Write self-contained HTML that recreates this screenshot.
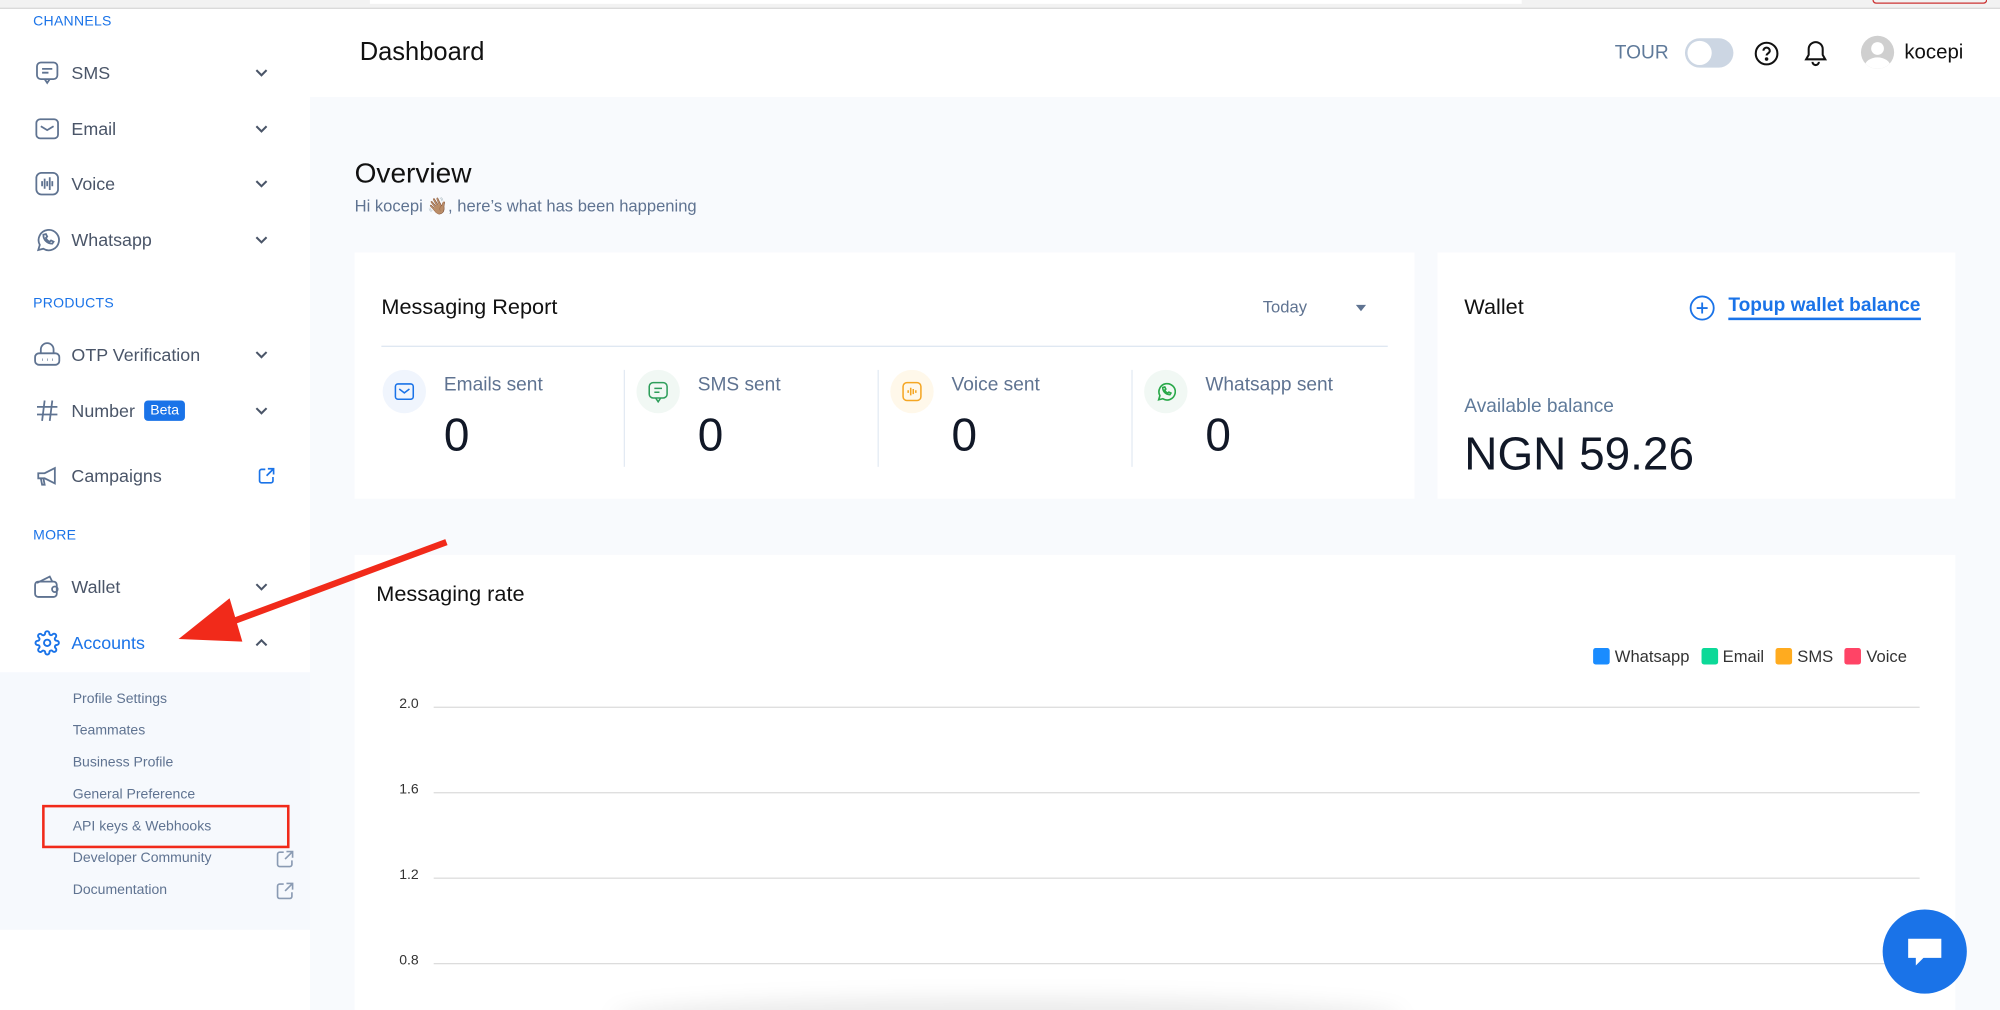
<!DOCTYPE html>
<html><head><meta charset="utf-8"><style>
*{box-sizing:border-box;margin:0;padding:0}
html,body{width:2000px;height:1010px;overflow:hidden;background:#fff;font-family:"Liberation Sans",Arial,sans-serif}
#w{position:absolute;left:0;top:0;width:1568px;height:792px;transform:scale(1.27551);transform-origin:0 0;background:#fff;overflow:hidden}
.a{position:absolute}
.sec{position:absolute;left:26px;font-size:11px;color:#1a73e8;letter-spacing:.2px}
.nav{position:absolute;left:26px;width:190px;height:24px;display:flex;align-items:center;font-size:14px;color:#4a5568}
.nav .ic{width:22px;height:22px;margin-right:8px;display:flex;align-items:center;justify-content:center}
.nav .chev{position:absolute;right:5px;top:6px}
.sub{position:absolute;left:57px;font-size:11px;color:#5f7391}
.card{position:absolute;background:#fff}
.stat{position:absolute;top:288px;width:190px;height:80px}
.stat .circ{position:absolute;left:0;top:2px;width:34px;height:34px;border-radius:50%}
.stat .lbl{position:absolute;left:48px;top:5px;font-size:15px;color:#5f7391}
.stat .num{position:absolute;left:48px;top:32px;font-size:36px;color:#111827}
.vd{position:absolute;top:290px;width:1px;height:76px;background:#e3eaf3}
.gl{position:absolute;left:340px;width:1165px;height:1px;background:#dcdcdc}
.yl{position:absolute;left:313px;font-size:11px;color:#333}
</style></head><body><div id="w">
<div class="a" style="left:0;top:0;width:1568px;height:7px;background:#f2f2f2;border-bottom:1px solid #d8d8d8"></div>
<div class="a" style="left:290px;top:0;width:903px;height:3px;background:#fff"></div>
<div class="a" style="left:1468px;top:0;width:90px;height:3px;border:1px solid #c33;border-top:none;border-radius:0 0 4px 4px"></div>

<div class="a" style="left:0;top:8px;width:243px;height:784px;background:#fff"></div>
<div class="sec" style="top:11px">CHANNELS</div>
<div class="nav" style="top:45px"><span class="ic"><svg width="20" height="20" viewBox="0 0 20 20" fill="none" stroke="#5f7391" stroke-width="1.4"><rect x="2" y="2" width="16" height="13" rx="3"/><path d="M8 15l2 3 2-3M6 7h8M6 10h5"/></svg></span>SMS<svg class="chev" width="12" height="12" viewBox="0 0 12 12" fill="none" stroke="#4a5568" stroke-width="1.6"><path d="M2 4l4 4 4-4"/></svg></div>
<div class="nav" style="top:89px"><span class="ic"><svg width="20" height="20" viewBox="0 0 20 20" fill="none" stroke="#5f7391" stroke-width="1.4"><rect x="1.5" y="2.5" width="17" height="15" rx="3"/><path d="M5 8l5 3 5-3"/></svg></span>Email<svg class="chev" width="12" height="12" viewBox="0 0 12 12" fill="none" stroke="#4a5568" stroke-width="1.6"><path d="M2 4l4 4 4-4"/></svg></div>
<div class="nav" style="top:132px"><span class="ic"><svg width="20" height="20" viewBox="0 0 20 20" fill="none" stroke="#5f7391" stroke-width="1.4"><rect x="1.5" y="1.5" width="17" height="17" rx="4"/><path d="M6 8v4M8 6v8M10 8v4M12 5v10M14 8v4"/></svg></span>Voice<svg class="chev" width="12" height="12" viewBox="0 0 12 12" fill="none" stroke="#4a5568" stroke-width="1.6"><path d="M2 4l4 4 4-4"/></svg></div>
<div class="nav" style="top:176px"><span class="ic"><svg width="20" height="20" viewBox="0 0 20 20" fill="none" stroke="#5f7391" stroke-width="1.4"><path d="M3 18l1.2-4A8 8 0 1 1 7 17z"/><path d="M7 6c0 4 3 7 7 7l1-1.5-2-1-1 1c-1.5-.5-2.5-1.5-3-3l1-1-1-2z"/></svg></span>Whatsapp<svg class="chev" width="12" height="12" viewBox="0 0 12 12" fill="none" stroke="#4a5568" stroke-width="1.6"><path d="M2 4l4 4 4-4"/></svg></div>

<div class="sec" style="top:232px">PRODUCTS</div>
<div class="nav" style="top:266px"><span class="ic"><svg width="22" height="20" viewBox="0 0 22 20" fill="none" stroke="#5f7391" stroke-width="1.4"><path d="M6 9V6a5 5 0 0 1 10 0v3"/><rect x="1.5" y="9" width="19" height="9" rx="3"/><path d="M7 14h.5M11 14h.5M15 14h.5" stroke-width="1.8"/></svg></span>OTP Verification<svg class="chev" width="12" height="12" viewBox="0 0 12 12" fill="none" stroke="#4a5568" stroke-width="1.6"><path d="M2 4l4 4 4-4"/></svg></div>
<div class="nav" style="top:310px"><span class="ic"><svg width="20" height="20" viewBox="0 0 20 20" fill="none" stroke="#5f7391" stroke-width="1.4"><path d="M8 2L6 18M14 2l-2 16M2 7h16M2 13h16"/></svg></span>Number<span style="margin-left:7px;background:#1a73e8;color:#fff;font-size:11px;padding:2px 5px;border-radius:3px">Beta</span><svg class="chev" width="12" height="12" viewBox="0 0 12 12" fill="none" stroke="#4a5568" stroke-width="1.6"><path d="M2 4l4 4 4-4"/></svg></div>
<div class="nav" style="top:361px"><span class="ic"><svg width="20" height="20" viewBox="0 0 20 20" fill="none" stroke="#5f7391" stroke-width="1.4"><path d="M3 8h5l8-4v12l-8-4H3z"/><path d="M5 12l1 5h2l-1-5"/></svg></span>Campaigns<svg class="chev" style="top:5px;right:0" width="14" height="14" viewBox="0 0 14 14" fill="none" stroke="#1a73e8" stroke-width="1.3"><path d="M6 2H3a1.5 1.5 0 0 0-1.5 1.5v7.5A1.5 1.5 0 0 0 3 12.5h7.5A1.5 1.5 0 0 0 12 11V8M8 1.5h4.5V6M12.5 1.5L7 7"/></svg></div>

<div class="sec" style="top:414px">MORE</div>
<div class="nav" style="top:448px"><span class="ic"><svg width="22" height="20" viewBox="0 0 22 20" fill="none" stroke="#5f7391" stroke-width="1.4"><path d="M3 7l10-5 2 4"/><rect x="1.5" y="6" width="17" height="12" rx="2.5"/><circle cx="17" cy="12" r="2.2"/></svg></span>Wallet<svg class="chev" width="12" height="12" viewBox="0 0 12 12" fill="none" stroke="#4a5568" stroke-width="1.6"><path d="M2 4l4 4 4-4"/></svg></div>
<div class="nav" style="top:492px;color:#1a73e8"><span class="ic"><svg width="20" height="20" viewBox="0 0 24 24" fill="none" stroke="#1a73e8" stroke-width="1.8"><circle cx="12" cy="12" r="3"/><path d="M19.4 15a1.7 1.7 0 0 0 .3 1.8l.1.1a2 2 0 1 1-2.8 2.8l-.1-.1a1.7 1.7 0 0 0-1.8-.3 1.7 1.7 0 0 0-1 1.5V21a2 2 0 1 1-4 0v-.1a1.7 1.7 0 0 0-1.1-1.5 1.7 1.7 0 0 0-1.8.3l-.1.1a2 2 0 1 1-2.8-2.8l.1-.1a1.7 1.7 0 0 0 .3-1.8 1.7 1.7 0 0 0-1.5-1H3a2 2 0 1 1 0-4h.1a1.7 1.7 0 0 0 1.5-1.1 1.7 1.7 0 0 0-.3-1.8l-.1-.1a2 2 0 1 1 2.8-2.8l.1.1a1.7 1.7 0 0 0 1.8.3H9a1.7 1.7 0 0 0 1-1.5V3a2 2 0 1 1 4 0v.1a1.7 1.7 0 0 0 1 1.5 1.7 1.7 0 0 0 1.8-.3l.1-.1a2 2 0 1 1 2.8 2.8l-.1.1a1.7 1.7 0 0 0-.3 1.8V9a1.7 1.7 0 0 0 1.5 1H21a2 2 0 1 1 0 4h-.1a1.7 1.7 0 0 0-1.5 1z"/></svg></span>Accounts<svg class="chev" width="12" height="12" viewBox="0 0 12 12" fill="none" stroke="#4a5568" stroke-width="1.6"><path d="M2 8l4-4 4 4"/></svg></div>
<div class="a" style="left:0;top:527px;width:243px;height:202px;background:#f6f9fd"></div>
<div class="sub" style="top:542px">Profile Settings</div>
<div class="sub" style="top:567px">Teammates</div>
<div class="sub" style="top:592px">Business Profile</div>
<div class="sub" style="top:617px">General Preference</div>
<div class="sub" style="top:642px">API keys &amp; Webhooks</div>
<div class="sub" style="top:667px">Developer Community</div>
<div class="sub" style="top:692px">Documentation</div>
<svg class="a" style="left:216px;top:666px" width="15" height="15" viewBox="0 0 14 14" fill="none" stroke="#8a9bb3" stroke-width="1.2"><path d="M6 2H3a1.5 1.5 0 0 0-1.5 1.5v7.5A1.5 1.5 0 0 0 3 12.5h7.5A1.5 1.5 0 0 0 12 11V8M8 1.5h4.5V6M12.5 1.5L7 7"/></svg>
<svg class="a" style="left:216px;top:691px" width="15" height="15" viewBox="0 0 14 14" fill="none" stroke="#8a9bb3" stroke-width="1.2"><path d="M6 2H3a1.5 1.5 0 0 0-1.5 1.5v7.5A1.5 1.5 0 0 0 3 12.5h7.5A1.5 1.5 0 0 0 12 11V8M8 1.5h4.5V6M12.5 1.5L7 7"/></svg>
<div class="a" style="left:33px;top:631px;width:194px;height:34px;border:2.5px solid #f12a1a"></div>

<div class="a" style="left:243px;top:76px;width:1325px;height:716px;background:#f8fafd"></div>
<div class="a" style="left:282px;top:30px;font-size:20px;color:#111">Dashboard</div>
<div class="a" style="left:1266px;top:33px;font-size:15px;color:#5f7a9a">TOUR</div>
<div class="a" style="left:1321px;top:30px;width:38px;height:23px;border-radius:12px;background:#ccd6e3"><div style="position:absolute;left:2px;top:2px;width:19px;height:19px;border-radius:50%;background:#fff"></div></div>
<svg class="a" style="left:1375px;top:32px" width="20" height="20" viewBox="0 0 20 20" fill="none" stroke="#111" stroke-width="1.6"><circle cx="10" cy="10" r="8.5"/><path d="M7.5 7.7a2.5 2.5 0 0 1 5 .3c0 1.6-2.5 2-2.5 3.5"/><circle cx="10" cy="14.3" r=".6" fill="#111"/></svg>
<svg class="a" style="left:1413px;top:31px" width="21" height="22" viewBox="0 0 21 22" fill="none" stroke="#111" stroke-width="1.6"><path d="M10.5 2a5.5 5.5 0 0 1 5.5 5.5V12l2 3.5H3L5 12V7.5A5.5 5.5 0 0 1 10.5 2z"/><path d="M8 17.5a2.5 2.5 0 0 0 5 0"/></svg>
<div class="a" style="left:1459px;top:28px;width:26px;height:26px;border-radius:50%;background:#cfcfcf;overflow:hidden"><div style="position:absolute;left:8px;top:5px;width:10px;height:10px;border-radius:50%;background:#fff"></div><div style="position:absolute;left:3px;top:17px;width:20px;height:14px;border-radius:50%;background:#fff"></div></div>
<div class="a" style="left:1493px;top:33px;font-size:16px;color:#111">kocepi</div>

<div class="a" style="left:278px;top:123px;font-size:22px;color:#111">Overview</div>
<div class="a" style="left:278px;top:154px;font-size:13px;color:#5f7391">Hi kocepi 👋🏽, here’s what has been happening</div>

<div class="card" style="left:278px;top:198px;width:831px;height:193px"></div>
<div class="a" style="left:299px;top:231px;font-size:17px;color:#111">Messaging Report</div>
<div class="a" style="left:990px;top:233px;font-size:13px;color:#5f7391">Today</div>
<div class="a" style="left:1063px;top:239px;width:0;height:0;border-left:4px solid transparent;border-right:4px solid transparent;border-top:5px solid #5f7391"></div>
<div class="a" style="left:299px;top:271px;width:789px;height:1px;background:#dde6f2"></div>
<div class="stat" style="left:300px"><div class="circ" style="background:#f0f5fd"><svg style="position:absolute;left:9px;top:10px" width="16" height="14" viewBox="0 0 16 14" fill="none" stroke="#1a73e8" stroke-width="1.2"><rect x="1" y="1" width="14" height="12" rx="2"/><path d="M4 5l4 3 4-3"/></svg></div><div class="lbl">Emails sent</div><div class="num">0</div></div>
<div class="vd" style="left:489px"></div>
<div class="stat" style="left:499px"><div class="circ" style="background:#f1f8f4"><svg style="position:absolute;left:9px;top:9px" width="16" height="17" viewBox="0 0 16 17" fill="none" stroke="#2e9e5b" stroke-width="1.2"><rect x="1" y="1" width="14" height="12" rx="3"/><path d="M6 13l2 3 2-3M5 5.5h6M5 8.5h4"/></svg></div><div class="lbl">SMS sent</div><div class="num">0</div></div>
<div class="vd" style="left:688px"></div>
<div class="stat" style="left:698px"><div class="circ" style="background:#fff8ea"><svg style="position:absolute;left:9px;top:9px" width="16" height="16" viewBox="0 0 16 16" fill="none" stroke="#f5a623" stroke-width="1.2"><rect x="1" y="1" width="14" height="14" rx="3"/><path d="M5 7v2M7 5v6M9 6v4M11 7v2"/></svg></div><div class="lbl">Voice sent</div><div class="num">0</div></div>
<div class="vd" style="left:887px"></div>
<div class="stat" style="left:897px"><div class="circ" style="background:#f1f8f4"><svg style="position:absolute;left:9px;top:9px" width="16" height="16" viewBox="0 0 20 20" fill="none" stroke="#2aa84a" stroke-width="1.6"><path d="M3 18l1.2-4A8 8 0 1 1 7 17z"/><path d="M7 6c0 4 3 7 7 7l1-1.5-2-1-1 1c-1.5-.5-2.5-1.5-3-3l1-1-1-2z"/></svg></div><div class="lbl">Whatsapp sent</div><div class="num">0</div></div>

<div class="card" style="left:1127px;top:198px;width:406px;height:193px"></div>
<div class="a" style="left:1148px;top:231px;font-size:17px;color:#111">Wallet</div>
<svg class="a" style="left:1324px;top:231px" width="21" height="21" viewBox="0 0 22 22" fill="none" stroke="#1a73e8" stroke-width="1.5"><circle cx="11" cy="11" r="9.5"/><path d="M11 6.5v9M6.5 11h9"/></svg>
<div class="a" style="left:1355px;top:231px;font-size:15px;font-weight:bold;color:#1a73e8;border-bottom:2px solid #1a73e8;padding-bottom:1px">Topup wallet balance</div>
<div class="a" style="left:1148px;top:310px;font-size:15px;color:#5f7a9a">Available balance</div>
<div class="a" style="left:1148px;top:335px;font-size:36px;color:#111827">NGN 59.26</div>

<div class="card" style="left:278px;top:435px;width:1255px;height:357px"></div>
<div class="a" style="left:295px;top:456px;font-size:17px;color:#111">Messaging rate</div>
<div class="a" style="left:1249px;top:507px;font-size:13px;color:#333;display:flex;align-items:center;white-space:nowrap">
<span style="width:13px;height:13px;background:#1a8cff;border-radius:2px;margin-right:4px"></span>Whatsapp
<span style="width:13px;height:13px;background:#0cd998;border-radius:2px;margin:0 4px 0 9px"></span>Email
<span style="width:13px;height:13px;background:#ffab1f;border-radius:2px;margin:0 4px 0 9px"></span>SMS
<span style="width:13px;height:13px;background:#ff4466;border-radius:2px;margin:0 4px 0 9px"></span>Voice</div>
<div class="yl" style="top:546px">2.0</div><div class="gl" style="top:554px"></div>
<div class="yl" style="top:613px">1.6</div><div class="gl" style="top:621px"></div>
<div class="yl" style="top:680px">1.2</div><div class="gl" style="top:688px"></div>
<div class="yl" style="top:747px">0.8</div><div class="gl" style="top:755px"></div>
<div class="a" style="left:480px;top:782px;width:620px;height:30px;border-radius:50%;background:rgba(0,0,0,.08);filter:blur(8px)"></div>

<svg class="a" style="left:0;top:0" width="400" height="520"><line x1="350" y1="425" x2="175" y2="490" stroke="#f12a1a" stroke-width="5"/><polygon points="140,501 180,469 190,503" fill="#f12a1a"/></svg>

<div class="a" style="left:1476px;top:713px;width:66px;height:66px;border-radius:50%;background:#1a73e8"><svg style="position:absolute;left:18px;top:20px" width="30" height="28" viewBox="0 0 30 28"><path d="M2 3h26v15H14l-6 6v-6H2z" fill="#fff"/></svg></div>
</div></body></html>
